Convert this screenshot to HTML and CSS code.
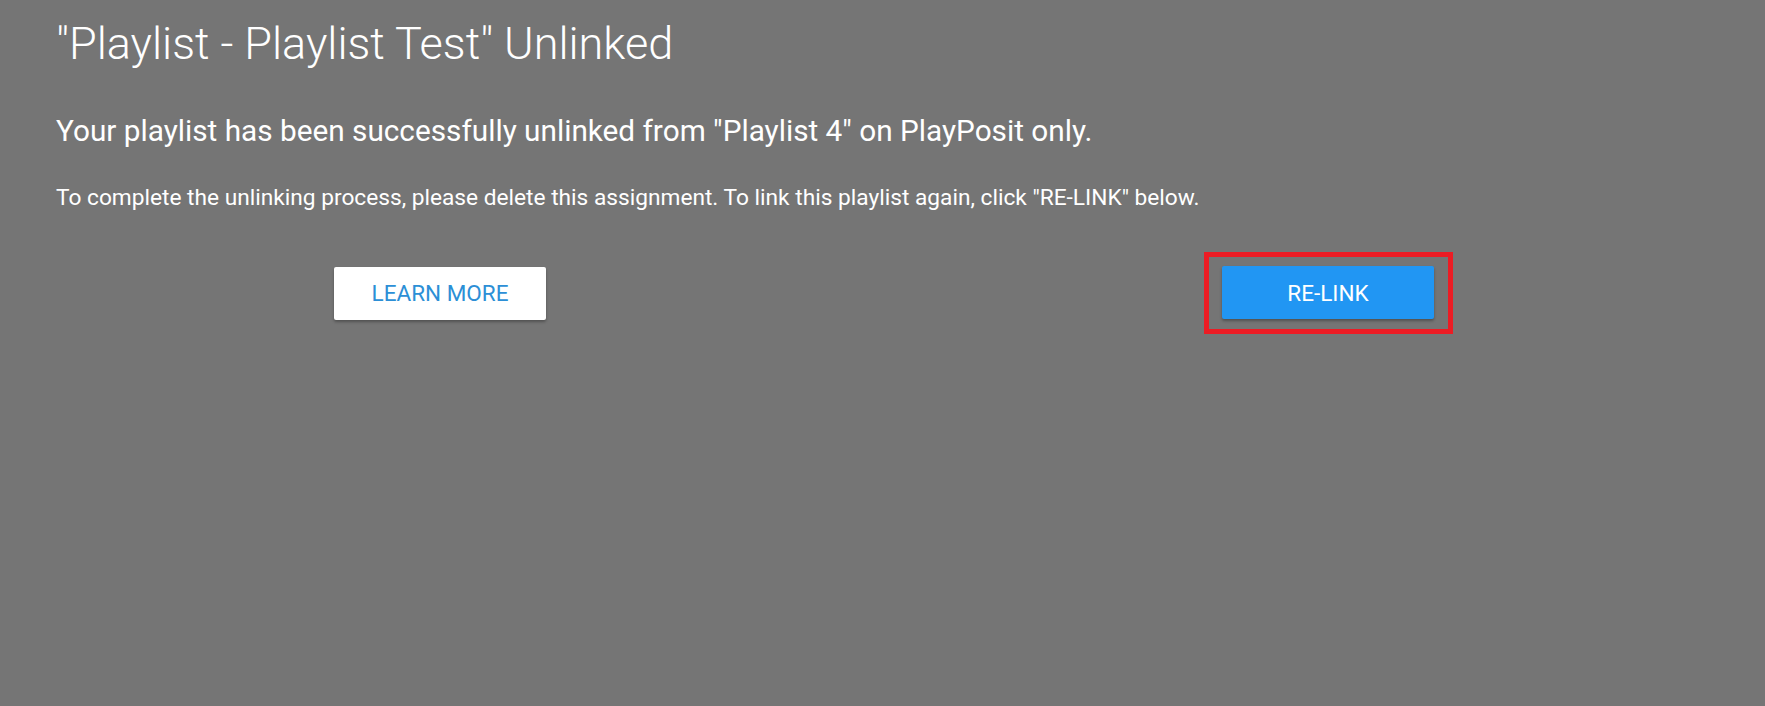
FILE: index.html
```html
<!DOCTYPE html>
<html lang="en">
<head>
  <meta charset="UTF-8" />
  <title>Playlist Unlinked</title>
  <link rel="stylesheet" href="styles.css">
</head>
<body>
  <main class="unlink-page">
    <h1 class="unlink-title">"Playlist - Playlist Test" Unlinked</h1>
    <p class="unlink-lead">Your playlist has been successfully unlinked from "Playlist 4" on PlayPosit only.</p>
    <p class="unlink-note">To complete the unlinking process, please delete this assignment. To link this playlist again, click "RE-LINK" below.</p>

    <div class="actions">
      <div class="action-col">
        <button class="btn btn-flat">LEARN MORE</button>
      </div>
      <div class="action-col">
        <div class="highlight">
          <button class="btn btn-primary">RE-LINK</button>
        </div>
      </div>
    </div>
  </main>
</body>
</html>
```

FILE: styles.css
```css
html, body {
  height: 100%;
}

body {
  margin: 0;
  background-color: #757575;
  color: #fff;
  font-family: Roboto, 'Noto Sans', sans-serif;
}

.unlink-page {
  padding: 14px 0 0 56px;
}

.unlink-title {
  margin: 0;
  font-size: 45px;
  font-weight: 300;
  line-height: 60px;
}

.unlink-lead {
  margin: 38px 0 0;
  font-size: 29.75px;
  font-weight: 400;
  line-height: 38px;
}

.unlink-note {
  margin: 33px 0 0;
  font-size: 22.7px;
  line-height: 30px;
}

.actions {
  display: grid;
  grid-template-columns: 880px 1fr;
  column-gap: 12px;
  margin: 39px 0 0 -56px;
}

.action-col {
  display: flex;
  justify-content: center;
  align-items: center;
}

.btn {
  width: 212px;
  height: 53px;
  border: none;
  border-radius: 2px;
  font-family: Roboto, 'Noto Sans', sans-serif;
  font-size: 22.5px;
  font-weight: 400;
  cursor: pointer;
  box-shadow: 0 2px 3px rgba(0, 0, 0, 0.3);
}

.btn-flat {
  background-color: #fff;
  color: #2c8fd6;
}

.btn-primary {
  background-color: #2196f3;
  color: #fff;
}

.highlight {
  border: 5px solid #ec1c24;
  padding: 9px 14px 10px 13px;
  display: flex;
}
```
